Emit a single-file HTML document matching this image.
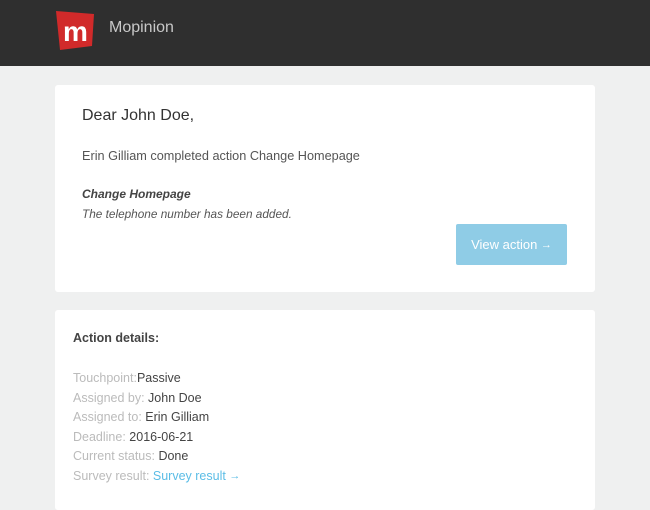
<!DOCTYPE html>
<html><head><meta charset="utf-8"><style>
*{margin:0;padding:0;box-sizing:border-box}
body{width:650px;height:500px;overflow:hidden;background:#eff0f0;font-family:"Liberation Sans",Arial,sans-serif;position:relative}
.hdr{position:absolute;left:0;top:0;width:650px;height:66px;background:#2f2f2f}
.brand{position:absolute;left:109px;top:19px;font-size:16px;color:#c8c8c8}
.card{position:absolute;left:55px;width:540px;background:#fff;border-radius:3px}
.t{position:absolute;white-space:nowrap}
.btn{position:absolute;left:401px;top:139px;width:111px;height:41px;background:#8fcce6;border-radius:2px;color:#fff;font-size:13px;text-align:center;line-height:41px}
.g{color:#bbb}.d{color:#444}
.ar{font-size:11px;position:relative;top:-1px}
</style></head><body>
<div class="hdr">
<svg style="position:absolute;left:54px;top:8px" width="44" height="44" viewBox="0 0 44 44">
<path d="M2 3 L40 6 L38 38 L6 42 Z" fill="#d12a2a"/>
<text x="9" y="33" font-family="Liberation Sans,Arial" font-weight="bold" font-size="28" fill="#fff">m</text>
</svg>
<div class="brand">Mopinion</div>
</div>
<div class="card" style="top:85px;height:207px">
<div class="t" style="left:27px;top:22px;font-size:16px;color:#333">Dear John Doe,</div>
<div class="t" style="left:27px;top:64px;font-size:12.7px;color:#555">Erin Gilliam completed action Change Homepage</div>
<div class="t" style="left:27px;top:102px;font-size:12px;color:#444;font-weight:bold;font-style:italic">Change Homepage</div>
<div class="t" style="left:27px;top:122px;font-size:11.8px;color:#555;font-style:italic">The telephone number has been added.</div>
<div class="btn">View action <span class="ar">→</span></div>
</div>
<div class="card" style="top:310px;height:200px">
<div class="t" style="left:18px;top:21px;font-size:12.5px;color:#444;font-weight:bold">Action details:</div>
<div class="t" style="left:18px;top:59px;font-size:12.5px;line-height:19.6px"><span class="g">Touchpoint:</span><span class="d">Passive</span><br><span class="g">Assigned by: </span><span class="d">John Doe</span><br><span class="g">Assigned to: </span><span class="d">Erin Gilliam</span><br><span class="g">Deadline: </span><span class="d">2016-06-21</span><br><span class="g">Current status: </span><span class="d">Done</span><br><span class="g">Survey result: </span><span style="color:#5bbde6">Survey result <span class="ar">→</span></span></div>
</div>
</body></html>
